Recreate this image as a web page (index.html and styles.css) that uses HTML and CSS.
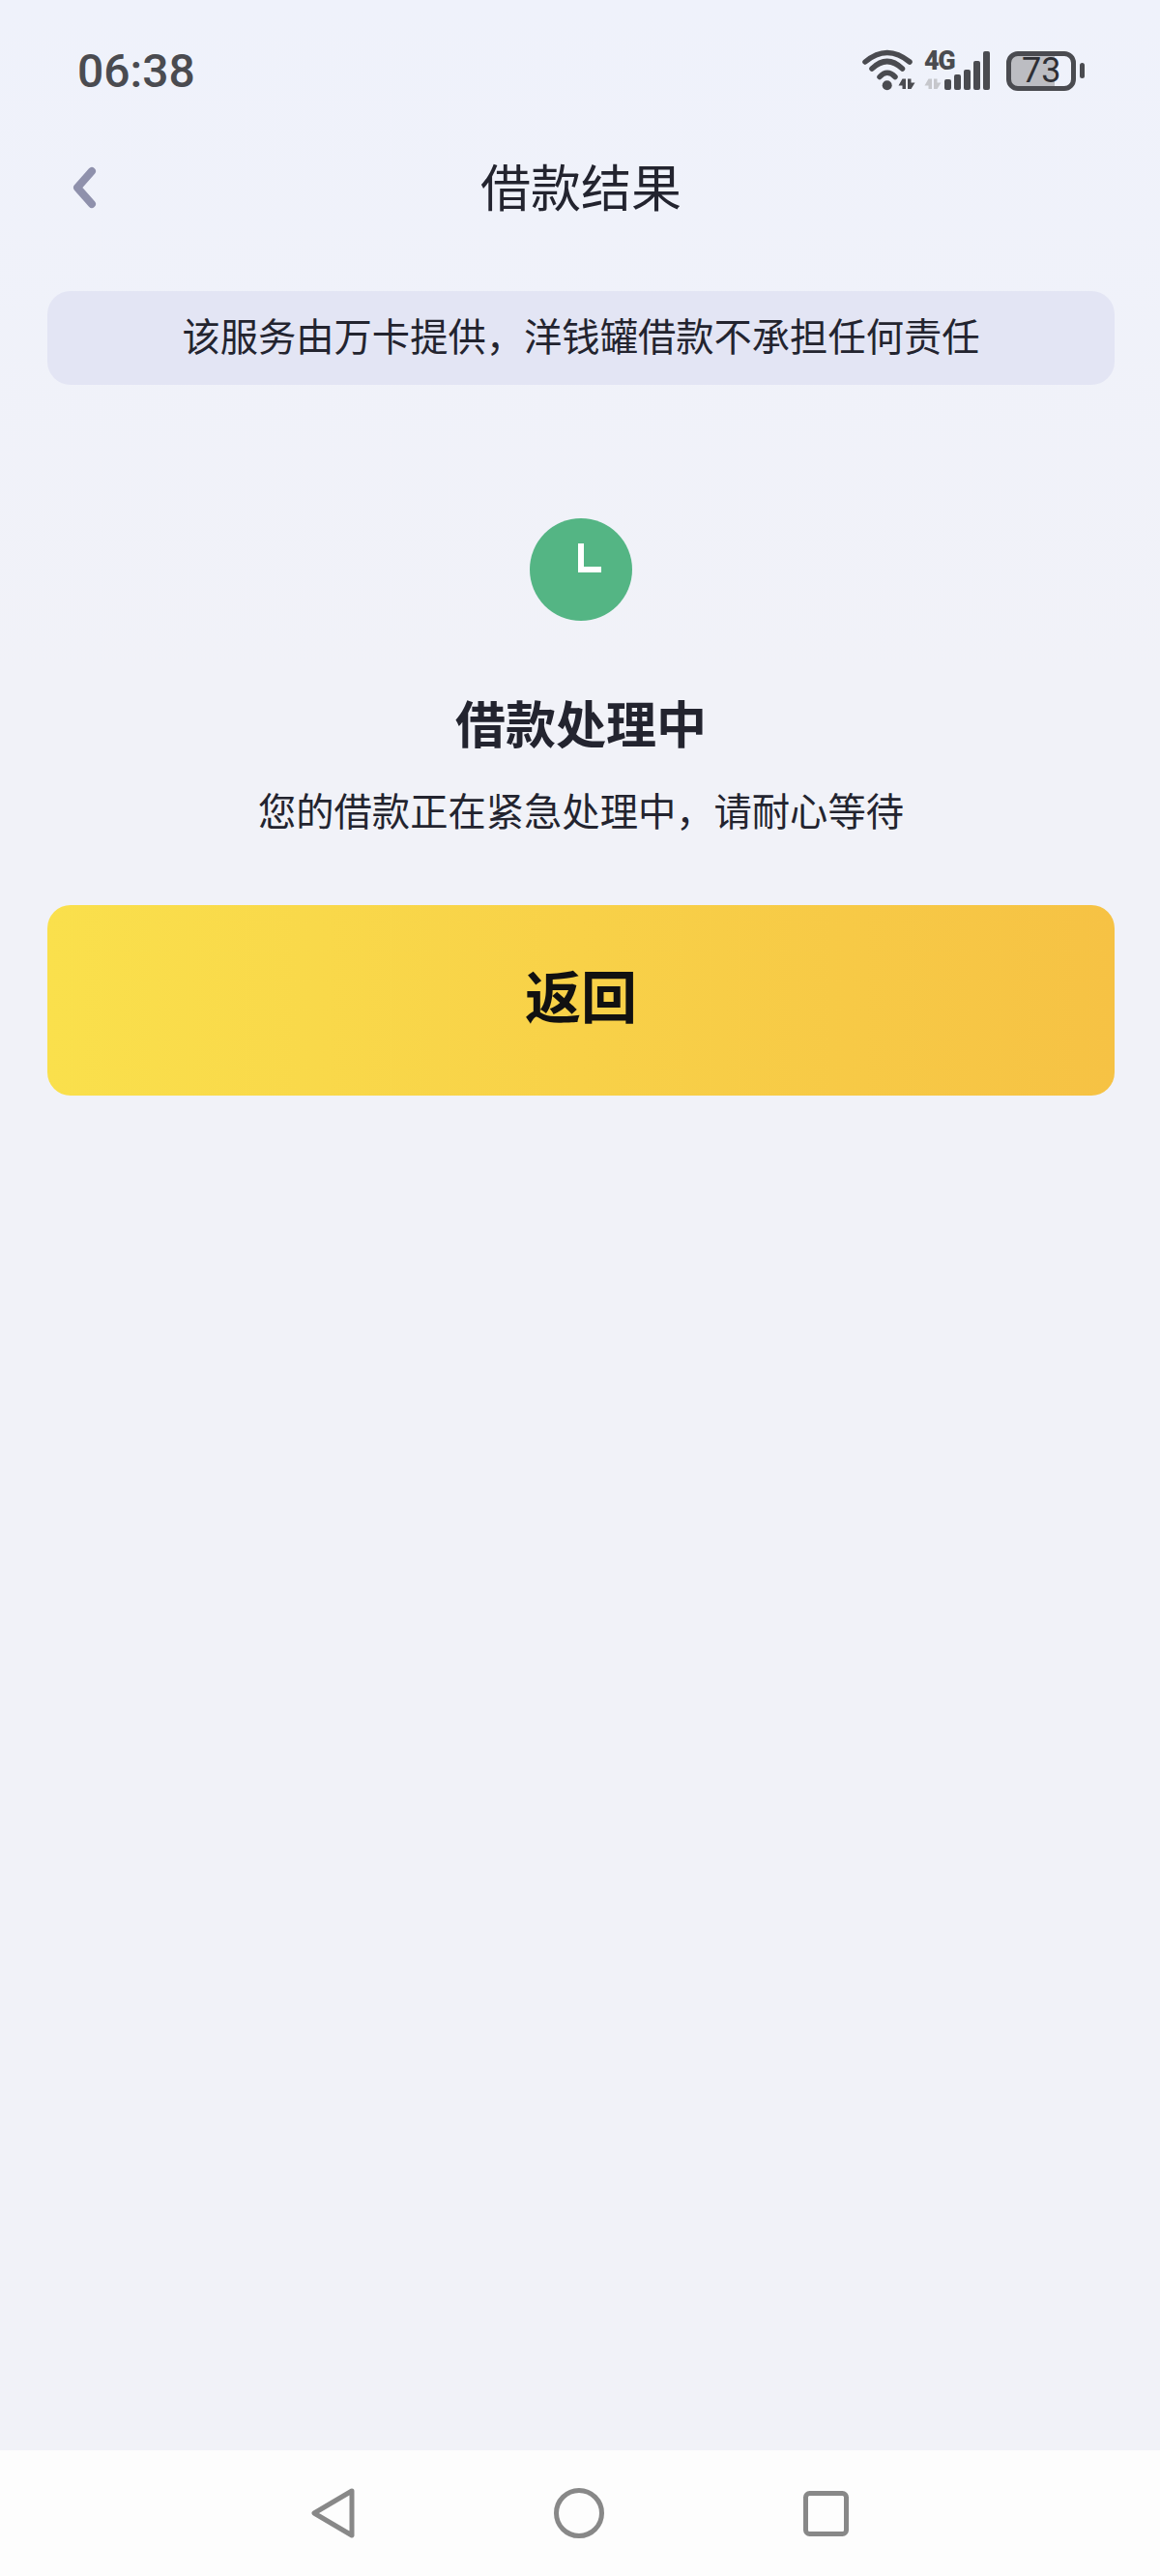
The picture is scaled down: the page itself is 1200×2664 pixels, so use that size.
FILE: index.html
```html
<!DOCTYPE HTML>
<html>
<head>
<meta charset="utf-8">
<title>借款结果</title>
<link rel="stylesheet" href="styles.css">
</head>

<body>
<div class="page">
	<div class="statusBar">
		<span class="time">06:38</span>
		<div class="statusIcons">
			<svg class="netIcon" width="136" height="58" viewBox="0 -6 136 58">
				<g fill="none" stroke="#4a4b50" stroke-width="5.500" stroke-linecap="round">
					<path d="M5 14Q27.7 -5 51 14"/>
					<path d="M12 21Q27.7 6 43.500 21"/>
					<path d="M20 29.500Q27.7 21 36 29.500"/>
				</g>
				<circle cx="27.700" cy="38.300" r="5" fill="#4a4b50"/>
				<path d="M43.500 31.500H47V42H43.500V38.500H39.500Z M49 31.500H52.500V35.500H56.500L52.500 42H49Z" fill="#4a4b50"/>
				<path d="M70.500 31.500H74V42H70.500V38.500H66.500Z M76 31.500H79.500V35.500H83.500L79.500 42H76Z" fill="#c6c7cc"/>
				<text class="netLabel" x="66" y="22">4G</text>
				<rect x="87" y="32" width="7" height="11" rx="2" fill="#4a4b50"/>
				<rect x="97" y="27" width="7" height="16" rx="2" fill="#4a4b50"/>
				<rect x="107" y="22" width="7" height="21" rx="2" fill="#4a4b50"/>
				<rect x="117" y="13" width="7" height="30" rx="2" fill="#4a4b50"/>
				<rect x="127" y="3" width="7" height="40" rx="2" fill="#4a4b50"/>
			</svg>
			<div class="battery"><span>73</span></div>
			<i class="batteryCap"></i>
		</div>
	</div>

	<div class="header">
		<svg class="backIcon" width="30" height="44" viewBox="0 0 30 44">
			<path d="M21 5L6 22L21 39" fill="none" stroke="#8f91ac" stroke-width="8" stroke-linecap="round" stroke-linejoin="round"/>
		</svg>
		<h1>借款结果</h1>
	</div>

	<div class="notice">该服务由万卡提供，洋钱罐借款不承担任何责任</div>

	<svg class="clock" width="106" height="106" viewBox="0 0 106 106">
		<circle cx="53" cy="53" r="53" fill="#54b584"/>
		<path d="M53 26V53H74" fill="none" stroke="#fff" stroke-width="6"/>
	</svg>

	<h2>借款处理中</h2>
	<p class="tip">您的借款正在紧急处理中，请耐心等待</p>

	<button class="backBtn">返回</button>
</div>

<div class="navBar">
	<svg width="45" height="52" viewBox="0 0 45 52">
		<path d="M42 3L3 26L42 49Z" fill="none" stroke="#888" stroke-width="5" stroke-linejoin="round"/>
	</svg>
	<svg width="52" height="52" viewBox="0 0 52 52">
		<circle cx="26" cy="26" r="23.500" fill="none" stroke="#888" stroke-width="5"/>
	</svg>
	<svg width="47" height="47" viewBox="0 0 47 47">
		<rect x="2.500" y="2.500" width="42" height="42" rx="4" fill="none" stroke="#888" stroke-width="5"/>
	</svg>
</div>
</body>
</html>
```

FILE: styles.css
```css
html, body {
	margin: 0;
	height: 100%;
}

body {
	display: flex;
	flex-direction: column;
	height: 2664px;
	background: linear-gradient(#eff2fb, #f1f2f8 700px);
	font-family: "Noto Sans CJK SC", "Noto Sans", sans-serif;
	color: #23242f;
}

.page {
	flex: 1;
	display: flex;
	flex-direction: column;
	align-items: center;
	padding: 0 47px 0 49px;
}

.statusBar {
	align-self: stretch;
	height: 146px;
	display: flex;
	justify-content: space-between;
	align-items: center;
	padding: 0 31px 0 31px;
}

.time {
	font-family: Roboto, sans-serif;
	font-size: 48px;
	font-weight: 500;
	color: #4a4b50;
}

.statusIcons {
	display: flex;
	align-items: center;
}

.netLabel {
	font-family: Roboto, sans-serif;
	font-size: 27px;
	font-weight: 900;
	letter-spacing: -1.500px;
	fill: #4a4b50;
}

.battery {
	box-sizing: border-box;
	width: 72px;
	height: 41px;
	margin-left: 15px;
	padding-left: 11px;
	border: 5px solid #4a4b50;
	border-radius: 12px;
	background: linear-gradient(to right, #bcbdc2 72%, transparent 72%);
	font-family: Roboto, sans-serif;
	font-size: 36px;
	line-height: 31px;
	color: #2f3035;
}

.batteryCap {
	width: 5px;
	height: 16px;
	margin-left: 4px;
	border-radius: 3px;
	background: #4a4b50;
}

.header {
	position: relative;
	align-self: stretch;
	height: 96px;
	margin-bottom: 59px;
	display: flex;
	justify-content: center;
	align-items: center;
}

.header h1 {
	margin: -6px 0 0;
	font-size: 52px;
	font-weight: 400;
}

.backIcon {
	position: absolute;
	left: 25px;
	top: 26px;
}

.notice {
	align-self: stretch;
	height: 97px;
	line-height: 90px;
	border-radius: 24px;
	background: #e3e5f4;
	text-align: center;
	font-size: 39.300px;
}

.clock {
	margin-top: 138px;
}

h2 {
	margin: 65px 0 0;
	font-size: 52px;
	font-weight: 700;
	line-height: 80px;
}

.tip {
	margin: 20px 0 0;
	font-size: 39.300px;
	line-height: 60px;
}

.backBtn {
	align-self: stretch;
	height: 197px;
	margin-top: 69px;
	padding: 0 0 14px;
	border: 0;
	border-radius: 24px;
	background: linear-gradient(to right, #fae04c, #f6c244);
	font-family: inherit;
	font-size: 58px;
	font-weight: 700;
	color: #111;
}

.navBar {
	height: 130px;
	background: #fdfdfd;
	display: flex;
	justify-content: center;
	align-items: center;
	gap: 206px;
}
```
